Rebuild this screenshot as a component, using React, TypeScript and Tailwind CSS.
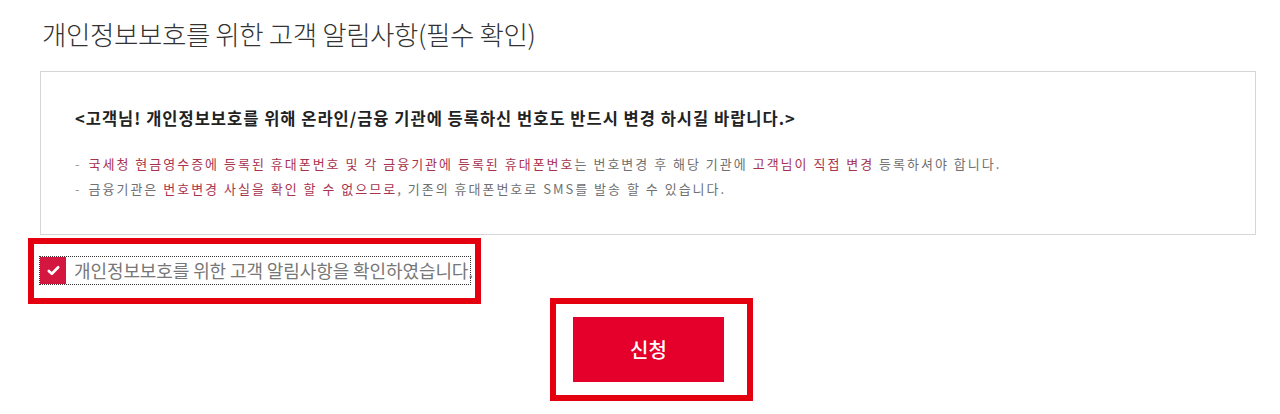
import React from 'react';

const RED = 'text-[#a8334f]';

const NoticeLine: React.FC<{ children: React.ReactNode }> = ({ children }) => (
  <p className="flex gap-[7px] text-[13px] leading-[25px] tracking-[2px] text-[#707070] whitespace-nowrap">
    <span className="text-[#9a9a9a]">-</span>
    <span>{children}</span>
  </p>
);

const CheckIcon = () => (
  <svg viewBox="0 0 16 16" className="w-[15px] h-[15px]" fill="none">
    <path d="M3 8.5l3.2 3L13 4.5" stroke="#fff" strokeWidth="2.8" strokeLinecap="round" strokeLinejoin="round" />
  </svg>
);

export default function App() {
  return (
    <div
      className="w-[1280px] h-[414px] overflow-hidden bg-white pl-[40px] pr-[24px] pt-[17px]"
      style={{ fontFamily: '"Noto Sans CJK KR", "Noto Sans", sans-serif' }}
    >
      {/* Title */}
      <h2 className="pl-[2px] text-[26.5px] leading-[34px] font-light text-[#333] tracking-[-0.4px]">
        개인정보보호를 위한 고객 알림사항(필수 확인)
      </h2>

      {/* Notice box */}
      <div className="mt-[20px] h-[164px] border border-[#d6d6d6] pl-[34px] pt-[35px]">
        <p className="text-[16.5px] leading-[22px] font-bold text-[#222] tracking-[1px] whitespace-nowrap">
          &lt;고객님! 개인정보보호를 위해 온라인/금융 기관에 등록하신 번호도 반드시 변경 하시길 바랍니다.&gt;
        </p>
        <div className="mt-[22px]">
          <NoticeLine>
            <span className={RED}>국세청 현금영수증에 등록된 휴대폰번호 및 각 금융기관에 등록된 휴대폰번호</span>는 번호변경 후 해당
            기관에 <span className={RED}>고객님이 직접 변경</span> 등록하셔야 합니다.
          </NoticeLine>
          <NoticeLine>
            금융기관은 <span className={RED}>번호변경 사실을 확인 할 수 없으므로</span>, 기존의 휴대폰번호로 SMS를 발송 할 수
            있습니다.
          </NoticeLine>
        </div>
      </div>

      {/* Agreement checkbox */}
      <div className="ml-[-12px] mt-[3px] w-[453px] h-[66px] border-[6px] border-[#e5000f] pl-[5px] pt-[12px]">
        <label className="flex w-[432px] h-[29px] items-center gap-[8px] border border-dotted border-[#333]">
          <span className="flex w-[26px] h-[27px] shrink-0 items-center justify-center bg-[#d3173f]">
            <CheckIcon />
          </span>
          <span className="text-[18px] leading-[27px] text-[#777] tracking-[-0.1px] whitespace-nowrap">
            개인정보보호를 위한 고객 알림사항을 확인하였습니다.
          </span>
        </label>
      </div>

      {/* Submit */}
      <div className="ml-[510px] mt-[-6px] w-[203px] h-[103px] border-[6px] border-[#e5000f] pl-[17px] pt-[13px]">
        <button className="w-[151px] h-[65px] bg-[#e4002b] text-white text-[20px] font-medium">신청</button>
      </div>
    </div>
  );
}
